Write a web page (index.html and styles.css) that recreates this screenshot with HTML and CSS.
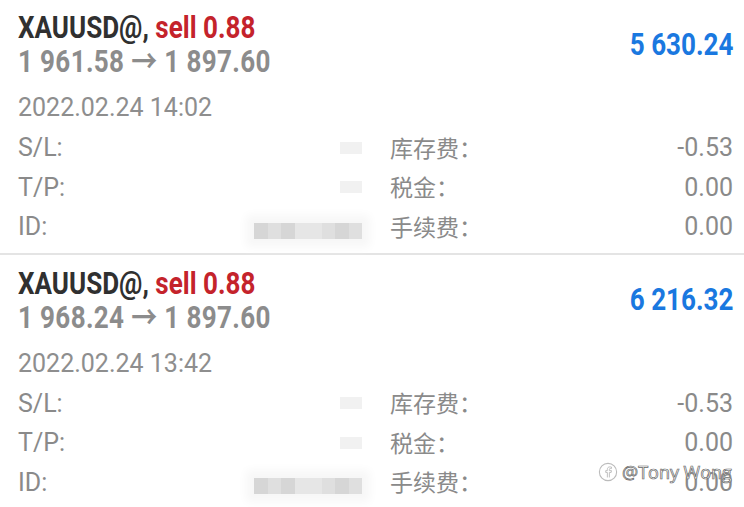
FILE: index.html
```html
<!DOCTYPE html>
<html>
<head>
	<title>Trades</title>
	<link rel="stylesheet" href="styles.css">
</head>
<body>
	<div class="list">
		<div class="trade">
			<div class="head">
				<div class="left">
					<div class="title">XAUUSD@, <span class="sell">sell 0.88</span></div>
					<div class="prices">1 961.58 &rarr; 1 897.60</div>
				</div>
				<div class="profit">5 630.24</div>
			</div>
			<div class="date">2022.02.24 14:02</div>
			<div class="rows">
				<div class="half"><span>S/L:</span><span class="blur small"></span></div>
				<div class="half"><span class="cn">库存费：</span><span>-0.53</span></div>
				<div class="half"><span>T/P:</span><span class="blur small"></span></div>
				<div class="half"><span class="cn">税金：</span><span>0.00</span></div>
				<div class="half"><span>ID:</span><span class="blur wide"><i></i><i></i><i></i><i></i><i></i><i></i><i></i><i></i></span></div>
				<div class="half"><span class="cn">手续费：</span><span>0.00</span></div>
			</div>
		</div>
		<div class="trade">
			<div class="head">
				<div class="left">
					<div class="title">XAUUSD@, <span class="sell">sell 0.88</span></div>
					<div class="prices">1 968.24 &rarr; 1 897.60</div>
				</div>
				<div class="profit">6 216.32</div>
			</div>
			<div class="date">2022.02.24 13:42</div>
			<div class="rows">
				<div class="half"><span>S/L:</span><span class="blur small"></span></div>
				<div class="half"><span class="cn">库存费：</span><span>-0.53</span></div>
				<div class="half"><span>T/P:</span><span class="blur small"></span></div>
				<div class="half"><span class="cn">税金：</span><span>0.00</span></div>
				<div class="half"><span>ID:</span><span class="blur wide"><i></i><i></i><i></i><i></i><i></i><i></i><i></i><i></i></span></div>
				<div class="half"><span class="cn">手续费：</span><span>0.00</span></div>
			</div>
		</div>
	</div>

	<div class="watermark">
		<svg width="20" height="20" viewBox="0 0 22 22"><circle cx="11" cy="11" r="9.5" fill="none" stroke="#bbb" stroke-width="1.2"/><path d="M12.5 17v-5.5h2l.3-2h-2.3V8.2c0-.6.2-1 1-1h1.3V5.5c-.3 0-1-.1-1.8-.1-1.8 0-2.7 1-2.7 2.7v1.4H8.5v2h1.8V17" fill="none" stroke="#bbb" stroke-width="1"/></svg>
		<span>@Tony Wong</span>
	</div>
</body>
</html>
```

FILE: styles.css
```css
body {
	margin: 0;
	background-color: #fff;
	font-family: Roboto, "Noto Sans CJK SC", sans-serif;
	color: #8a8a8a;
	overflow: hidden;
}

.list {
	margin-top: -2px;
}

.trade {
	padding: 13px 11px 6px 18px;
	border-bottom: 2px solid #e4e4e4;
}

.trade + .trade {
	padding-top: 12px;
}

.head {
	display: flex;
	justify-content: space-between;
	align-items: center;
}

/* condensed look: Roboto squeezed sideways */
.left {
	transform: scaleX(0.84);
	transform-origin: left center;
}

.title,
.prices {
	font-size: 31px;
	line-height: 34px;
	font-weight: bold;
	white-space: nowrap;
}

.title {
	color: #303030;
}

.sell {
	color: #c4232b;
}

.prices {
	color: #8c8c8c;
	letter-spacing: 0.4px;
}

.profit {
	font-size: 31px;
	font-weight: bold;
	color: #1a78e0;
	white-space: nowrap;
	transform: scaleX(0.84);
	transform-origin: right center;
	margin-top: -2px;
}

.date {
	margin-top: 14px;
	font-size: 25px;
	line-height: 30px;
	color: #8e8e8e;
}

.rows {
	margin-top: 5px;
	display: grid;
	grid-template-columns: 344px 1fr;
	grid-auto-rows: 39.5px;
	column-gap: 28px;
	font-size: 25px;
	color: #8a8a8a;
}

.half {
	display: flex;
	justify-content: space-between;
	align-items: center;
}

.cn {
	font-size: 23px;
	margin-top: -2px;
}

.blur {
	display: flex;
	background-color: #f1f1f1;
}

.blur.small {
	width: 22px;
	height: 12px;
}

.blur.wide {
	width: 108px;
	height: 16px;
	margin-top: 8px;
	box-shadow: 0 0 10px 8px #f7f7f7;
}

.blur i {
	flex: 1;
	background-color: #d6d6d6;
}

.blur i:nth-child(2n) {
	background-color: #dfdfdf;
}

.blur i:nth-child(5),
.blur i:nth-child(4) {
	background-color: #e6e6e6;
}

.watermark {
	position: absolute;
	left: 598px;
	top: 460px;
	display: flex;
	align-items: center;
	gap: 4px;
	white-space: nowrap;
	font-family: "Open Sans", sans-serif;
	font-size: 18px;
	color: #fff;
	-webkit-text-stroke: 0.7px #666;
}
```
